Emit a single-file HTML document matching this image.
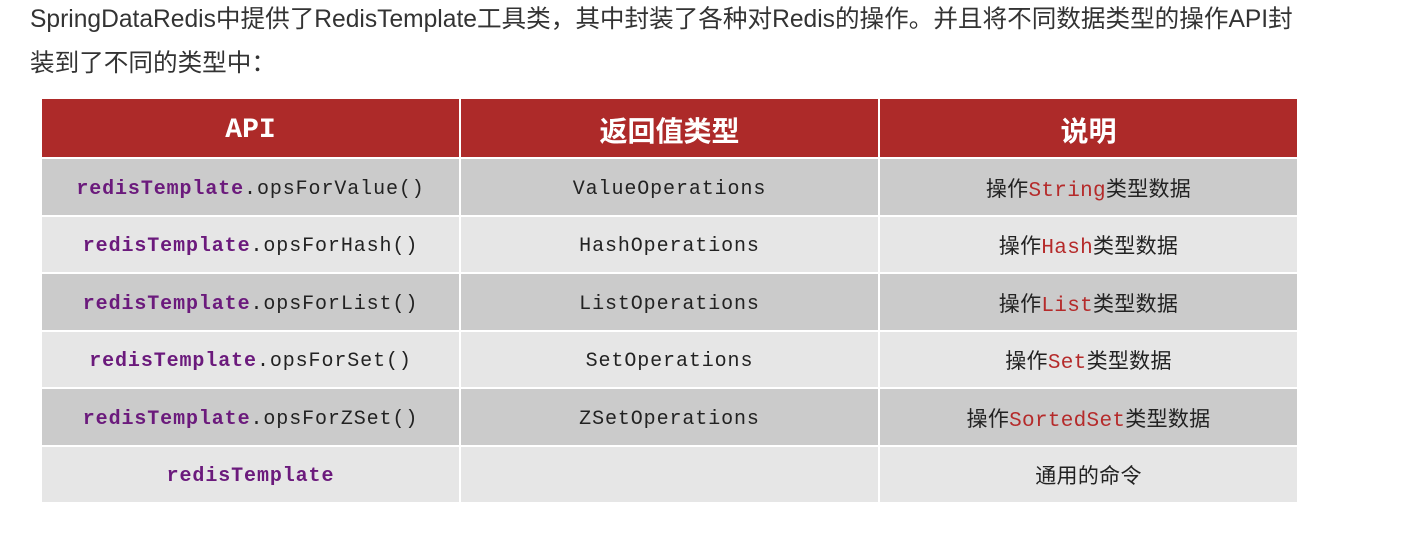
<!DOCTYPE html>
<html><head><meta charset="utf-8"><style>
body{margin:0;width:1413px;height:535px;background:#fff;overflow:hidden;font-family:"Liberation Sans","Noto Sans CJK SC",sans-serif;}
.p{position:absolute;left:30px;font-size:24.6px;line-height:30px;color:#333;white-space:nowrap;}
table{position:absolute;left:40px;top:97px;border-collapse:collapse;table-layout:fixed;}
td,th{border:2px solid #fff;text-align:center;padding:0;vertical-align:middle;}
th{background:#ad2a29;color:#fff;height:60px;padding-top:4px;box-sizing:border-box;font-size:28px;font-weight:bold;font-family:"Liberation Mono","Noto Sans CJK SC",monospace;}
td{height:57.5px;padding-top:6px;box-sizing:border-box;line-height:24px;font-family:"Liberation Mono","Noto Sans CJK SC",monospace;font-size:20px;letter-spacing:0.9px;color:#222;}
tr.a td{background:#cbcbcb}
tr.b td{background:#e6e6e6}
b{color:#6b1a7c}
.r{color:#b52a2a;font-size:21px}
.c{letter-spacing:0.3px;font-size:21px;padding-top:10px}
</style></head><body>
<div class="p" style="top:5px">SpringDataRedis中提供了RedisTemplate工具类，其中封装了各种对Redis的操作。并且将不同数据类型的操作API封</div>
<div class="p" style="top:49px">装到了不同的类型中：</div>
<table>
<colgroup><col style="width:419px"><col style="width:419px"><col style="width:419px"></colgroup>
<tr><th>API</th><th>返回值类型</th><th>说明</th></tr>
<tr class="a"><td><b>redisTemplate</b>.opsForValue()</td><td>ValueOperations</td><td class="c">操作<span class="r">String</span>类型数据</td></tr>
<tr class="b"><td><b>redisTemplate</b>.opsForHash()</td><td>HashOperations</td><td class="c">操作<span class="r">Hash</span>类型数据</td></tr>
<tr class="a"><td><b>redisTemplate</b>.opsForList()</td><td>ListOperations</td><td class="c">操作<span class="r">List</span>类型数据</td></tr>
<tr class="b"><td><b>redisTemplate</b>.opsForSet()</td><td>SetOperations</td><td class="c">操作<span class="r">Set</span>类型数据</td></tr>
<tr class="a"><td><b>redisTemplate</b>.opsForZSet()</td><td>ZSetOperations</td><td class="c">操作<span class="r">SortedSet</span>类型数据</td></tr>
<tr class="b"><td><b>redisTemplate</b></td><td></td><td class="c">通用的命令</td></tr>
</table>
</body></html>
